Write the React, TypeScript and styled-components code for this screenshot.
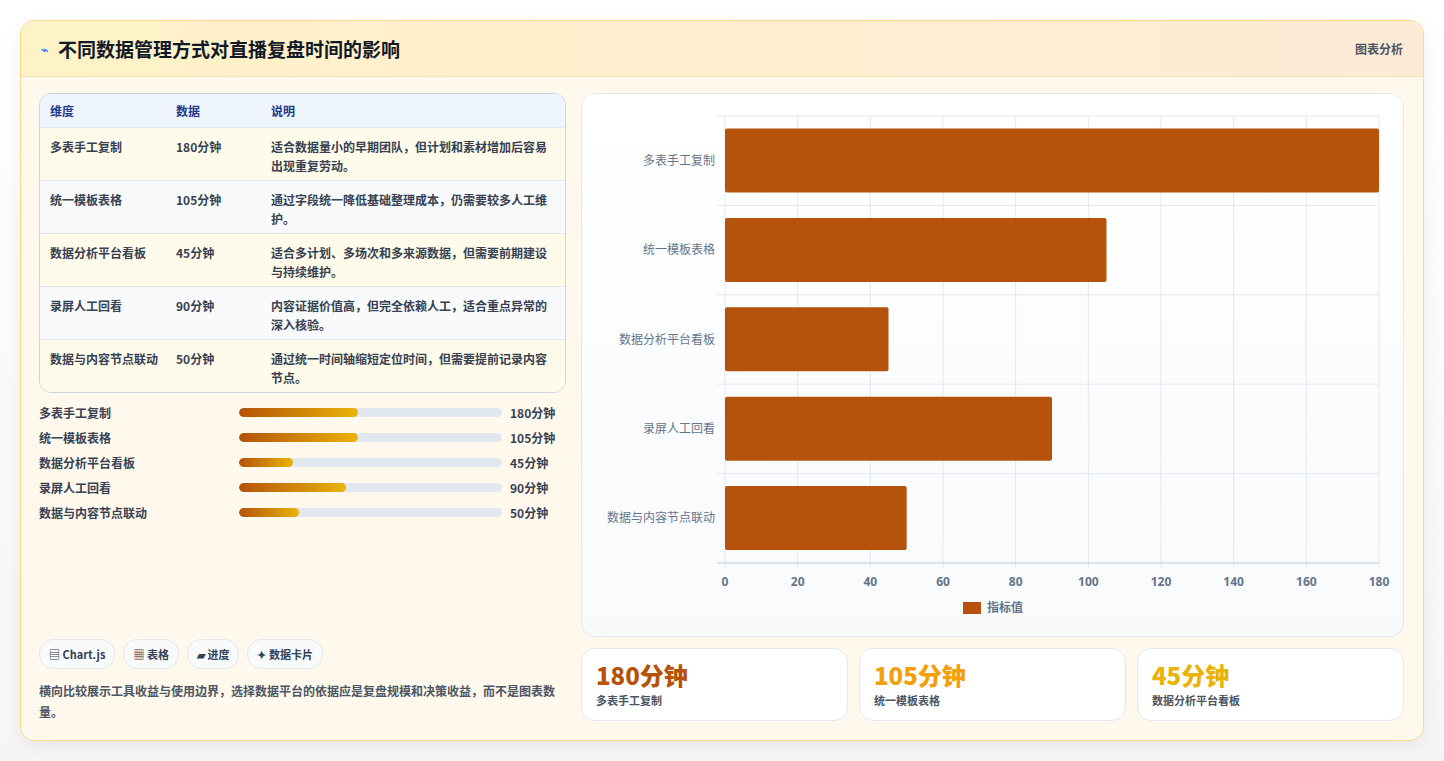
import React from "react";
import styled, { createGlobalStyle } from "styled-components";

const Global = createGlobalStyle`
  html, body { margin: 0; padding: 0; background: #f3f4f6; }
  body { font-family: "Noto Sans CJK SC", "Noto Sans", sans-serif; color: #1f2937; }
`;

const Page = styled.div`
  width: 1444px; height: 761px; padding: 20px 20px 0 20px; box-sizing: border-box;
  background: linear-gradient(#ffffff, #f5f5f5);
`;
const Card = styled.div`
  width: 1404px; height: 721px; box-sizing: border-box;
  border: 1px solid #fcd98a; border-radius: 14px; overflow: hidden;
  background: #fff8ec; display: flex; flex-direction: column;
  box-shadow: 0 6px 18px rgba(0,0,0,0.06);
`;
const Header = styled.div`
  height: 55px; flex: none; display: flex; align-items: center; justify-content: space-between;
  padding: 0 20px 0 20px; border-bottom: 1px solid #f6e3b4;
  background: linear-gradient(90deg, #fef2c7, #fdebd6);
`;
const Title = styled.div`
  display: flex; align-items: center; gap: 10px; font-size: 19px; font-weight: 700; color: #111827;
`;
const TitleIcon = styled.span` color: #3b82f6; font-size: 12px; `;
const HeaderTag = styled.div` font-size: 12px; font-weight: 700; color: #4b5563; `;
const Body = styled.div`
  flex: 1; display: grid; grid-template-columns: 527px 823px; gap: 15px; padding: 16px 18px 18px 18px;
`;
const Left = styled.div` display: flex; flex-direction: column; min-height: 0; `;
const Right = styled.div` display: flex; flex-direction: column; gap: 11px; `;
const Table = styled.div`
  border: 1px solid #cbd5e1; border-radius: 12px; overflow: hidden; background: #fffbeb;
`;
const Row = styled.div<{ $head?: boolean; $alt?: boolean }>`
  display: grid; grid-template-columns: 126px 95px 1fr; padding: 0 18px 0 10px;
  height: ${p => (p.$head ? "33px" : "53px")}; align-items: ${p => (p.$head ? "center" : "start")};
  box-sizing: border-box; padding-top: ${p => (p.$head ? "0" : "9px")};
  background: ${p => (p.$head ? "#eef5fd" : p.$alt ? "#f8fafc" : "#fffbeb")};
  border-top: ${p => (p.$head ? "none" : "1px solid #e2e8f0")};
  font-size: 12px; font-weight: 700; line-height: 19px;
  color: ${p => (p.$head ? "#1e3a8a" : "#374151")};
`;
const Bars = styled.div` display: flex; flex-direction: column; gap: 7px; margin-top: 10px; `;
const BarRow = styled.div`
  display: grid; grid-template-columns: 192px 263px 1fr; column-gap: 8px; align-items: center;
  height: 18px; font-size: 12px; font-weight: 700; color: #374151;
`;
const Track = styled.div` height: 9px; border-radius: 5px; background: #e2e8f0; overflow: hidden; `;
const Fill = styled.div` height: 100%; border-radius: 5px; background: linear-gradient(90deg, #b45309, #eab308); `;
const Spacer = styled.div` flex: 1; `;
const Chips = styled.div` display: flex; gap: 8px; `;
const Chip = styled.div`
  height: 28px; padding: 0 9px; display: flex; align-items: center; border-radius: 14px;
  border: 1px solid #e5e7eb; background: #f8fafc; font-size: 11px; font-weight: 700; color: #334155;
`;
const Note = styled.div` margin-top: 11px; font-size: 12px; font-weight: 700; line-height: 21px; color: #4b5563; `;
const ChartPanel = styled.div`
  height: 544px; box-sizing: border-box; border: 1px solid #e2e8f0; border-radius: 14px;
  background: linear-gradient(#ffffff, #f8fafc); overflow: hidden;
`;
const Stats = styled.div` display: grid; grid-template-columns: repeat(3, 1fr); gap: 11px; `;
const Stat = styled.div`
  height: 73px; box-sizing: border-box; border: 1px solid #e2e8f0; border-radius: 14px; background: #fff;
  padding: 9px 14px;
`;
const StatValue = styled.div<{ $c: string }>` font-size: 24px; font-weight: 800; line-height: 34px; color: ${p => p.$c}; `;
const StatLabel = styled.div` font-size: 11px; font-weight: 700; color: #4b5563; `;

const rows = [
  ["多表手工复制", "180分钟", "适合数据量小的早期团队，但计划和素材增加后容易出现重复劳动。"],
  ["统一模板表格", "105分钟", "通过字段统一降低基础整理成本，仍需要较多人工维护。"],
  ["数据分析平台看板", "45分钟", "适合多计划、多场次和多来源数据，但需要前期建设与持续维护。"],
  ["录屏人工回看", "90分钟", "内容证据价值高，但完全依赖人工，适合重点异常的深入核验。"],
  ["数据与内容节点联动", "50分钟", "通过统一时间轴缩短定位时间，但需要提前记录内容节点。"],
];
const bars: [string, string, number][] = [
  ["多表手工复制", "180分钟", 45.2],
  ["统一模板表格", "105分钟", 45.2],
  ["数据分析平台看板", "45分钟", 20.5],
  ["录屏人工回看", "90分钟", 40.7],
  ["数据与内容节点联动", "50分钟", 22.8],
];
const values = [180, 105, 45, 90, 50];

function Chart() {
  const x0 = 143, x1 = 797, y0 = 22, y1 = 469;
  const sx = (v: number) => x0 + ((x1 - x0) * v) / 180;
  const band = (y1 - y0) / 5;
  return (
    <svg width="823" height="544" viewBox="0 0 823 544">
      {[0, 20, 40, 60, 80, 100, 120, 140, 160, 180].map(t => (
        <g key={t}>
          <line x1={sx(t)} x2={sx(t)} y1={y0} y2={y1 + 6} stroke="#e2e8f0" />
          <text x={sx(t)} y={492} textAnchor="middle" fontSize="12" fontWeight="700" fill="#64748b" fontFamily="Noto Sans">{t}</text>
        </g>
      ))}
      {[0, 1, 2, 3, 4, 5].map(i => (
        <line key={i} x1={x0 - 8} x2={x1} y1={y0 + band * i} y2={y0 + band * i} stroke="#e2e8f0" />
      ))}
      <line x1={x0 - 8} x2={x1} y1={y1} y2={y1} stroke="#cbd5e1" />
      {rows.map((r, i) => (
        <g key={i}>
          <rect x={x0} y={y0 + band * i + 12.5} width={sx(values[i]) - x0} height={64} rx="2" fill="#b45309" />
          <text x={x0 - 10} y={y0 + band * i + band / 2 + 4} textAnchor="end" fontSize="12" fill="#64748b" fontFamily="Noto Sans CJK SC">{r[0]}</text>
        </g>
      ))}
      <rect x={381} y={508} width={18} height={12} fill="#b45309" />
      <text x={405} y={518} fontSize="12" fontWeight="700" fill="#64748b" fontFamily="Noto Sans CJK SC">指标值</text>
    </svg>
  );
}

export default function App() {
  return (
    <Page>
      <Global />
      <Card>
        <Header>
          <Title><TitleIcon>⌁</TitleIcon>不同数据管理方式对直播复盘时间的影响</Title>
          <HeaderTag>图表分析</HeaderTag>
        </Header>
        <Body>
          <Left>
            <Table>
              <Row $head><span>维度</span><span>数据</span><span>说明</span></Row>
              {rows.map((r, i) => (
                <Row key={i} $alt={i % 2 === 1}><span>{r[0]}</span><span>{r[1]}</span><span>{r[2]}</span></Row>
              ))}
            </Table>
            <Bars>
              {bars.map(b => (
                <BarRow key={b[0]}>
                  <span>{b[0]}</span>
                  <Track><Fill style={{ width: `${b[2]}%` }} /></Track>
                  <span>{b[1]}</span>
                </BarRow>
              ))}
            </Bars>
            <Spacer />
            <Chips>
              <Chip>▤ Chart.js</Chip>
              <Chip>▦ 表格</Chip>
              <Chip>▰ 进度</Chip>
              <Chip>✦ 数据卡片</Chip>
            </Chips>
            <Note>横向比较展示工具收益与使用边界，选择数据平台的依据应是复盘规模和决策收益，而不是图表数量。</Note>
          </Left>
          <Right>
            <ChartPanel><Chart /></ChartPanel>
            <Stats>
              <Stat><StatValue $c="#b45309">180分钟</StatValue><StatLabel>多表手工复制</StatLabel></Stat>
              <Stat><StatValue $c="#f59e0b">105分钟</StatValue><StatLabel>统一模板表格</StatLabel></Stat>
              <Stat><StatValue $c="#eab308">45分钟</StatValue><StatLabel>数据分析平台看板</StatLabel></Stat>
            </Stats>
          </Right>
        </Body>
      </Card>
    </Page>
  );
}
